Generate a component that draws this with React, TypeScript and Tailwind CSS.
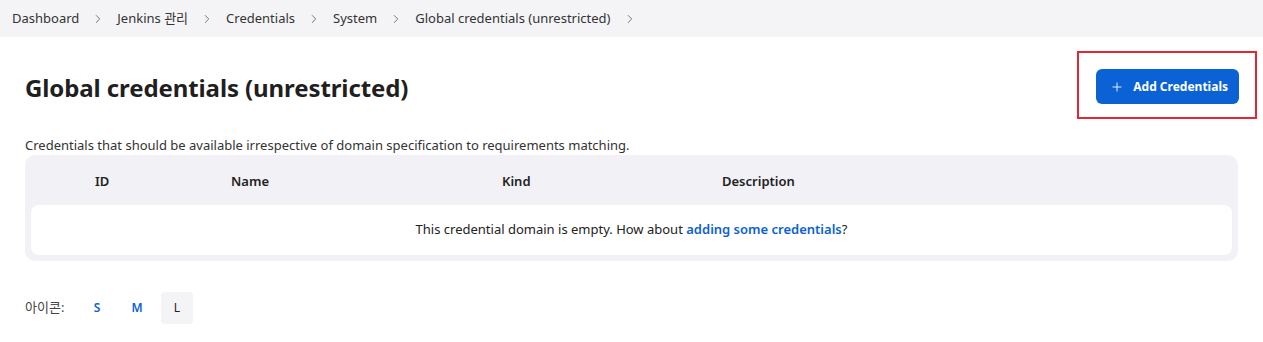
import { Plus, ChevronRight } from 'lucide-react';

const crumbs = ['Dashboard', 'Jenkins 관리', 'Credentials', 'System', 'Global credentials (unrestricted)'];

const font = { fontFamily: '"Noto Sans", "Noto Sans CJK KR", sans-serif' };

export default function App() {
  return (
    <div className="min-h-[342px] bg-white text-[#1f1f1f]" style={font}>
      {/* breadcrumb */}
      <div className="h-[37px] bg-[#f4f4f6] flex items-center pl-[12px] text-[13px] text-[#333]">
        {crumbs.map((c) => (
          <div key={c} className="flex items-center">
            <span>{c}</span>
            <ChevronRight className="mx-[12px] w-[14px] h-[14px] text-[#666]" strokeWidth={1.5} />
          </div>
        ))}
      </div>

      <div className="px-[25px]">
        {/* header */}
        <div className="flex items-center justify-between pt-[14px]">
          <h1 className="text-[24px] font-bold tracking-[-0.1px] mt-[5px]">Global credentials (unrestricted)</h1>
          <div className="border-2 border-[#e3262f] pl-[17px] pr-[16px] pt-[16px] pb-[13px] -mr-[19px]">
            <button className="h-[35px] bg-[#0b62d4] text-white rounded-[6px] flex items-center pl-[14px] pr-[11px] text-[12px] font-bold">
              <Plus className="w-[14px] h-[14px] mr-[9px]" strokeWidth={1.5} />
              Add Credentials
            </button>
          </div>
        </div>

        <p className="text-[13px] text-[#333] mt-[17px] leading-[18px]">
          Credentials that should be available irrespective of domain specification to requirements matching.
        </p>

        {/* table */}
        <div className="mt-[1px] bg-[#f2f2f6] rounded-[10px] p-[6px]">
          <div className="flex h-[44px] items-center pb-[2px] text-[13px] font-semibold text-[#222]">
            <div className="w-[64px]" />
            <div className="w-[136px]">ID</div>
            <div className="w-[271px]">Name</div>
            <div className="w-[220px]">Kind</div>
            <div>Description</div>
          </div>
          <div className="bg-white rounded-[8px] h-[50px] flex items-center justify-center text-[13px] text-[#222]">
            <span>
              This credential domain is empty. How about{' '}
              <a className="text-[#0b62d4] font-semibold">adding some credentials</a>?
            </span>
          </div>
        </div>

        {/* icon size */}
        <div className="flex items-center mt-[31px] text-[13px]">
          <span className="w-[56px] text-[#444]">아이콘:</span>
          <span className="w-[32px] h-[32px] flex items-center justify-center text-[#0b62d4] font-semibold text-[12px]">S</span>
          <span className="ml-[8px] w-[32px] h-[32px] flex items-center justify-center text-[#0b62d4] font-semibold text-[12px]">M</span>
          <span className="ml-[8px] w-[32px] h-[32px] flex items-center justify-center bg-[#f4f4f6] rounded-[4px] text-[#222] text-[12px]">L</span>
        </div>
      </div>
    </div>
  );
}
